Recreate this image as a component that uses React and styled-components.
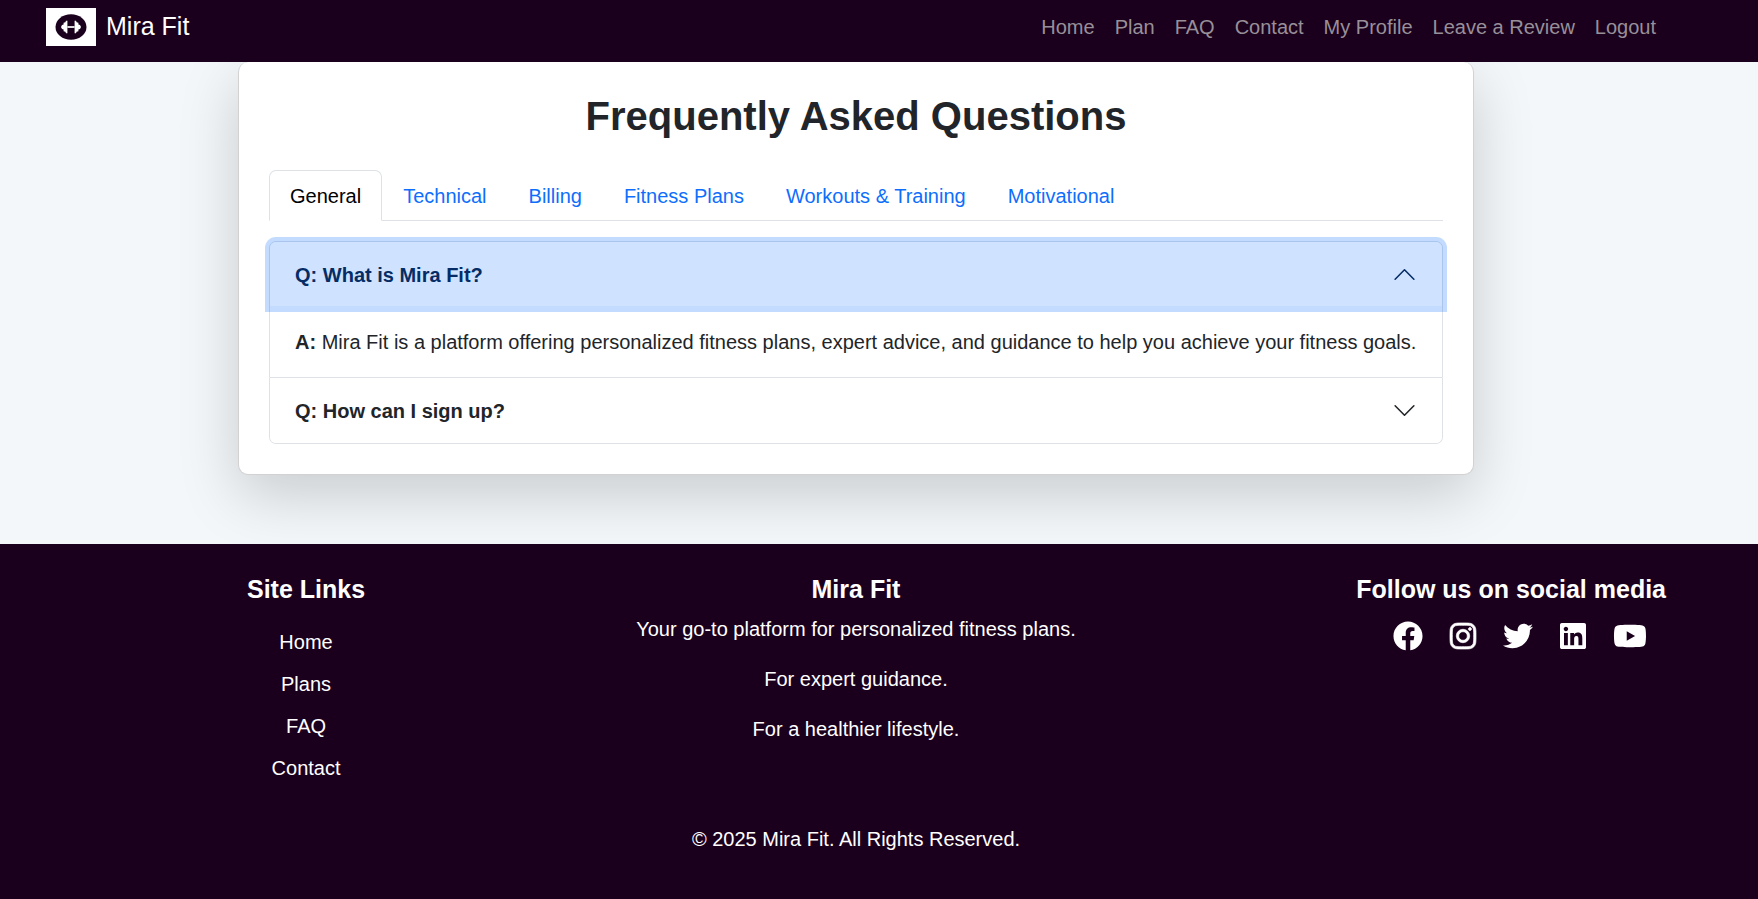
import React, { useState } from "react";
import styled, { createGlobalStyle } from "styled-components";
import { FaFacebook, FaInstagram, FaTwitter, FaLinkedin, FaYoutube } from "react-icons/fa";

const GlobalStyle = createGlobalStyle`
  *, *::before, *::after { box-sizing: border-box; }
  body {
    margin: 0;
    background: #1b001e;
    color: #212529;
    font: 400 20px/30px "Liberation Sans", Arial, sans-serif;
  }
  h1, h2, h3, p, ul { margin: 0; padding: 0; }
  ul { list-style: none; }
  a { color: inherit; text-decoration: none; }
`;

const Navbar = styled.nav`
  display: flex;
  justify-content: space-between;
  align-items: flex-start;
  padding: 8px 102px 16px 46px;
  background: #1b001e;
`;

const Brand = styled.a`
  display: flex;
  align-items: flex-start;
  gap: 10px;
  color: #fff;
  font-size: 25px;
  line-height: 36px;
`;

const LogoBox = styled.svg`
  width: 50px;
  height: 38px;
  background: #fff;
`;

const NavList = styled.ul`
  display: flex;
  gap: 20px;
  padding-top: 4px;
  color: #989098;
`;

const Main = styled.main`
  display: flex;
  justify-content: center;
  padding: 0 46px 69px 0;
  background: #f3f7fa;
  overflow: hidden;
`;

const Card = styled.section`
  width: 100%;
  max-width: 1236px;
  padding: 30px;
  background: #fff;
  border: 1px solid rgba(0, 0, 0, 0.175);
  border-top: 0;
  border-radius: 10px;
  box-shadow: 0 20px 60px rgba(0, 0, 0, 0.175);
`;

const Title = styled.h1`
  margin-bottom: 30px;
  font-size: 40px;
  line-height: 48px;
  text-align: center;
`;

const TabBar = styled.div`
  display: flex;
  margin-bottom: 20px;
  border-bottom: 1px solid #dee2e6;
`;

const Tab = styled.button`
  height: 51px;
  margin-bottom: -1px;
  padding: 0 20px;
  font: inherit;
  color: ${(p) => (p.$active ? "#000" : "#0d6efd")};
  background: ${(p) => (p.$active ? "#fff" : "transparent")};
  border: 1px solid ${(p) => (p.$active ? "#dee2e6" : "transparent")};
  border-bottom-color: ${(p) => (p.$active ? "#fff" : "transparent")};
  border-radius: 7px 7px 0 0;
  cursor: pointer;
`;

const Item = styled.div`
  border: 1px solid #dee2e6;
  &:not(:first-child) { border-top: 0; }
  &:first-child { border-radius: 7px 7px 0 0; }
  &:last-child { border-radius: 0 0 7px 7px; }
`;

const Question = styled.button`
  display: flex;
  justify-content: space-between;
  align-items: center;
  width: 100%;
  height: 65px;
  padding: 0 25px;
  font: inherit;
  font-weight: 700;
  text-align: left;
  color: ${(p) => (p.$open ? "#052c65" : "#212529")};
  background: ${(p) => (p.$open ? "#cfe2ff" : "#fff")};
  border: 0;
  border-radius: ${(p) => (p.$open ? "6px 6px 0 0" : "0 0 6px 6px")};
  box-shadow: ${(p) => (p.$open ? "inset 0 -1px 0 #c2dbfe, 0 0 0 5px rgba(13, 110, 253, 0.25)" : "none")};
  outline: 0;
  cursor: pointer;
`;

const Chevron = styled.svg`
  width: 25px;
  height: 25px;
  transform: ${(p) => (p.$open ? "rotate(180deg)" : "none")};
`;

const Answer = styled.p`
  padding: 20px 25px;
`;

const Footer = styled.footer`
  padding: 30px 46px 45px 0;
  background: #1b001e;
  color: #fff;
  text-align: center;
`;

const FooterColumns = styled.div`
  display: grid;
  grid-template-columns: minmax(0, 1fr) auto minmax(0, 1fr);
  margin-bottom: 41px;
`;

const FooterColumn = styled.div`
  justify-self: ${(p) => p.$align || "center"};
  padding: ${(p) => p.$inset || "0"};
`;

const FooterHeading = styled.h2`
  margin-bottom: 10px;
  font-size: 25px;
  line-height: 30px;
`;

const FooterLinks = styled.ul`
  display: grid;
  gap: 12px;
  padding-top: 13px;
`;

const Taglines = styled.div`
  display: grid;
  gap: 20px;
`;

const SocialRow = styled.div`
  display: flex;
  justify-content: center;
  gap: 27px;
  padding: 7px 0 0 18px;
`;

const SocialLink = styled.a`
  display: flex;
  svg {
    width: ${(p) => p.$width}px;
    height: 30px;
    overflow: visible;
    stroke-width: ${(p) => (p.$bold ? 12 : 0)};
  }
`;

const navLinks = ["Home", "Plan", "FAQ", "Contact", "My Profile", "Leave a Review", "Logout"];
const tabs = ["General", "Technical", "Billing", "Fitness Plans", "Workouts & Training", "Motivational"];
const siteLinks = ["Home", "Plans", "FAQ", "Contact"];
const taglines = [
  "Your go-to platform for personalized fitness plans.",
  "For expert guidance.",
  "For a healthier lifestyle.",
];
const questions = [
  {
    q: "What is Mira Fit?",
    a: "Mira Fit is a platform offering personalized fitness plans, expert advice, and guidance to help you achieve your fitness goals.",
  },
  { q: "How can I sign up?", a: "Open the Plan page and choose a plan to create your account." },
];
const socials = [
  { name: "Facebook", Icon: FaFacebook, width: 30 },
  { name: "Instagram", Icon: FaInstagram, width: 26, bold: true },
  { name: "Twitter", Icon: FaTwitter, width: 30 },
  { name: "LinkedIn", Icon: FaLinkedin, width: 26 },
  { name: "YouTube", Icon: FaYoutube, width: 34 },
];

function Logo() {
  return (
    <LogoBox viewBox="0 0 50 38" aria-hidden="true">
      <ellipse cx="25" cy="19" rx="15.5" ry="12.8" fill="#1b001e" />
      <g fill="#fff">
        <path d="M15 19l1-2 1.600-.4v-1.800l1.800-.6.6-1.400h1.400v12.400h-1.400l-.6-1.400-1.800-.6v-1.800l-1.600-.4z" />
        <path d="M35 19l-1-2-1.600-.4v-1.800l-1.800-.6-.6-1.400h-1.400v12.400h1.400l.6-1.400 1.800-.6v-1.800l1.600-.4z" />
        <path d="M21.400 18.100h7.200v1.800h-7.200z" opacity=".85" />
      </g>
    </LogoBox>
  );
}

export default function App() {
  const [tab, setTab] = useState("General");
  const [open, setOpen] = useState(0);
  return (
    <>
      <GlobalStyle />
      <Navbar>
        <Brand href="#"><Logo />Mira Fit</Brand>
        <NavList>
          {navLinks.map((l) => <li key={l}><a href="#">{l}</a></li>)}
        </NavList>
      </Navbar>
      <Main>
        <Card>
          <Title>Frequently Asked Questions</Title>
          <TabBar role="tablist">
            {tabs.map((t) => (
              <Tab key={t} type="button" role="tab" aria-selected={t === tab} $active={t === tab} onClick={() => setTab(t)}>{t}</Tab>
            ))}
          </TabBar>
          <div>
            {questions.map(({ q, a }, i) => (
              <Item key={q}>
                <Question type="button" aria-expanded={open === i} $open={open === i} onClick={() => setOpen(open === i ? -1 : i)}>
                  Q: {q}
                  <Chevron viewBox="0 0 16 16" $open={open === i} fill="none" stroke="currentColor" strokeLinecap="round" strokeLinejoin="round" aria-hidden="true">
                    <path d="m2 5 6 6 6-6" />
                  </Chevron>
                </Question>
                {open === i && <Answer><strong>A:</strong> {a}</Answer>}
              </Item>
            ))}
          </div>
        </Card>
      </Main>
      <Footer>
        <FooterColumns>
          <FooterColumn $align="start" $inset="0 0 0 247px">
            <FooterHeading>Site Links</FooterHeading>
            <FooterLinks>
              {siteLinks.map((l) => <li key={l}><a href="#">{l}</a></li>)}
            </FooterLinks>
          </FooterColumn>
          <FooterColumn>
            <FooterHeading>Mira Fit</FooterHeading>
            <Taglines>{taglines.map((t) => <p key={t}>{t}</p>)}</Taglines>
          </FooterColumn>
          <FooterColumn $align="end" $inset="0 46px 0 0">
            <FooterHeading>Follow us on social media</FooterHeading>
            <SocialRow>
              {socials.map(({ name, Icon, width, bold }) => (
                <SocialLink key={name} href="#" aria-label={name} $width={width} $bold={bold}><Icon /></SocialLink>
              ))}
            </SocialRow>
          </FooterColumn>
        </FooterColumns>
        <p>© 2025 Mira Fit. All Rights Reserved.</p>
      </Footer>
    </>
  );
}
